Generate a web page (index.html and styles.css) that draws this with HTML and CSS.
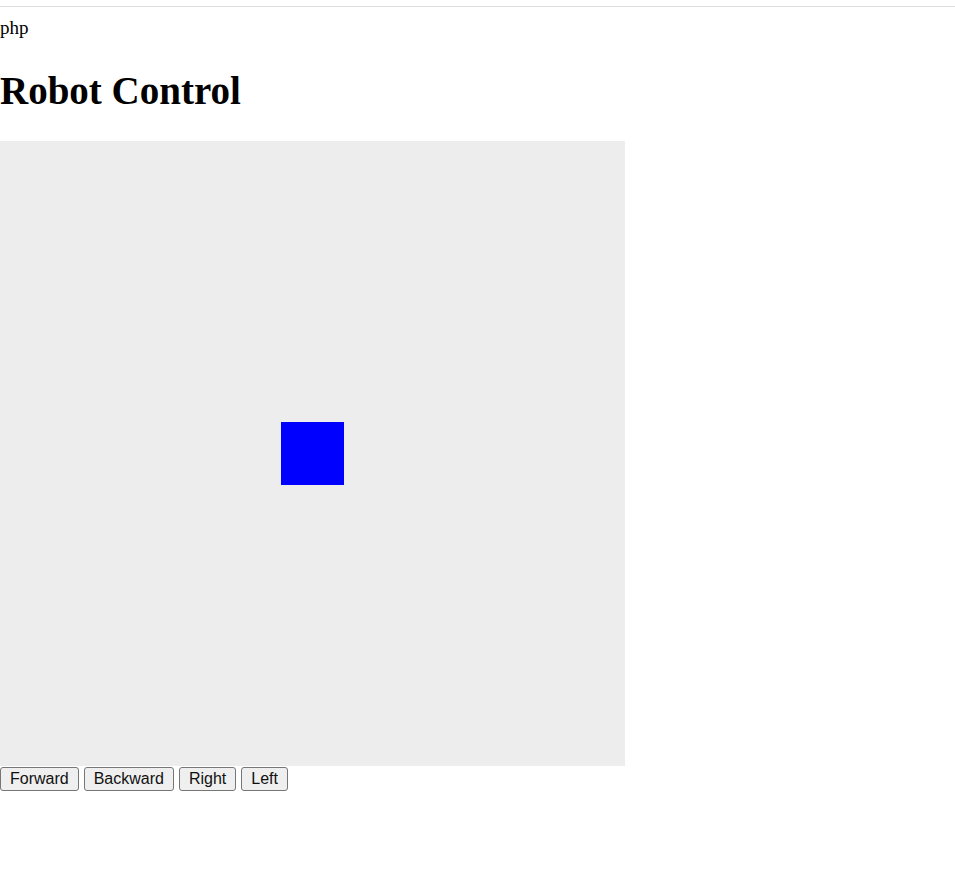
FILE: index.html
```html
<!DOCTYPE html>
<html>
<head>
<meta charset="utf-8">
<title>Robot Control</title>
<link rel="stylesheet" href="styles.css">
</head>
<body>
<div class="topline"></div>
<div class="label">php</div>
<h1 class="title">Robot Control</h1>
<div class="arena">
  <div class="robot"></div>
</div>
<div class="controls">
  <button class="btn">Forward</button>
  <button class="btn">Backward</button>
  <button class="btn">Right</button>
  <button class="btn">Left</button>
</div>
</body>
</html>
```
FILE: styles.css
```css
html, body {
  margin: 0;
  padding: 0;
  background: #ffffff;
}
body {
  font-family: "Liberation Serif", "Times New Roman", serif;
  font-size: 19px;
  color: #000;
}
.topline {
  margin-top: 6px;
  border-top: 1px solid #dedede;
}
.label {
  margin-top: 10px;
  line-height: normal;
}
.title {
  font-size: 39px;
  font-weight: bold;
  margin: 29px 0 28px 0;
  line-height: normal;
}
.arena {
  width: 625px;
  height: 625px;
  background: #ededed;
  display: flex;
  align-items: center;
  justify-content: center;
}
.robot {
  width: 62.5px;
  height: 62.5px;
  background: #0000ff;
}
.controls {
  display: flex;
  gap: 5px;
  margin-top: 1px;
}
.btn {
  font-family: "Liberation Sans", Arial, sans-serif;
  font-size: 16px;
  line-height: normal;
  padding: 2px 9px;
  border: 1px solid #767676;
  border-radius: 3px;
  background: #efefef;
  color: #111;
  margin: 0;
}
```
